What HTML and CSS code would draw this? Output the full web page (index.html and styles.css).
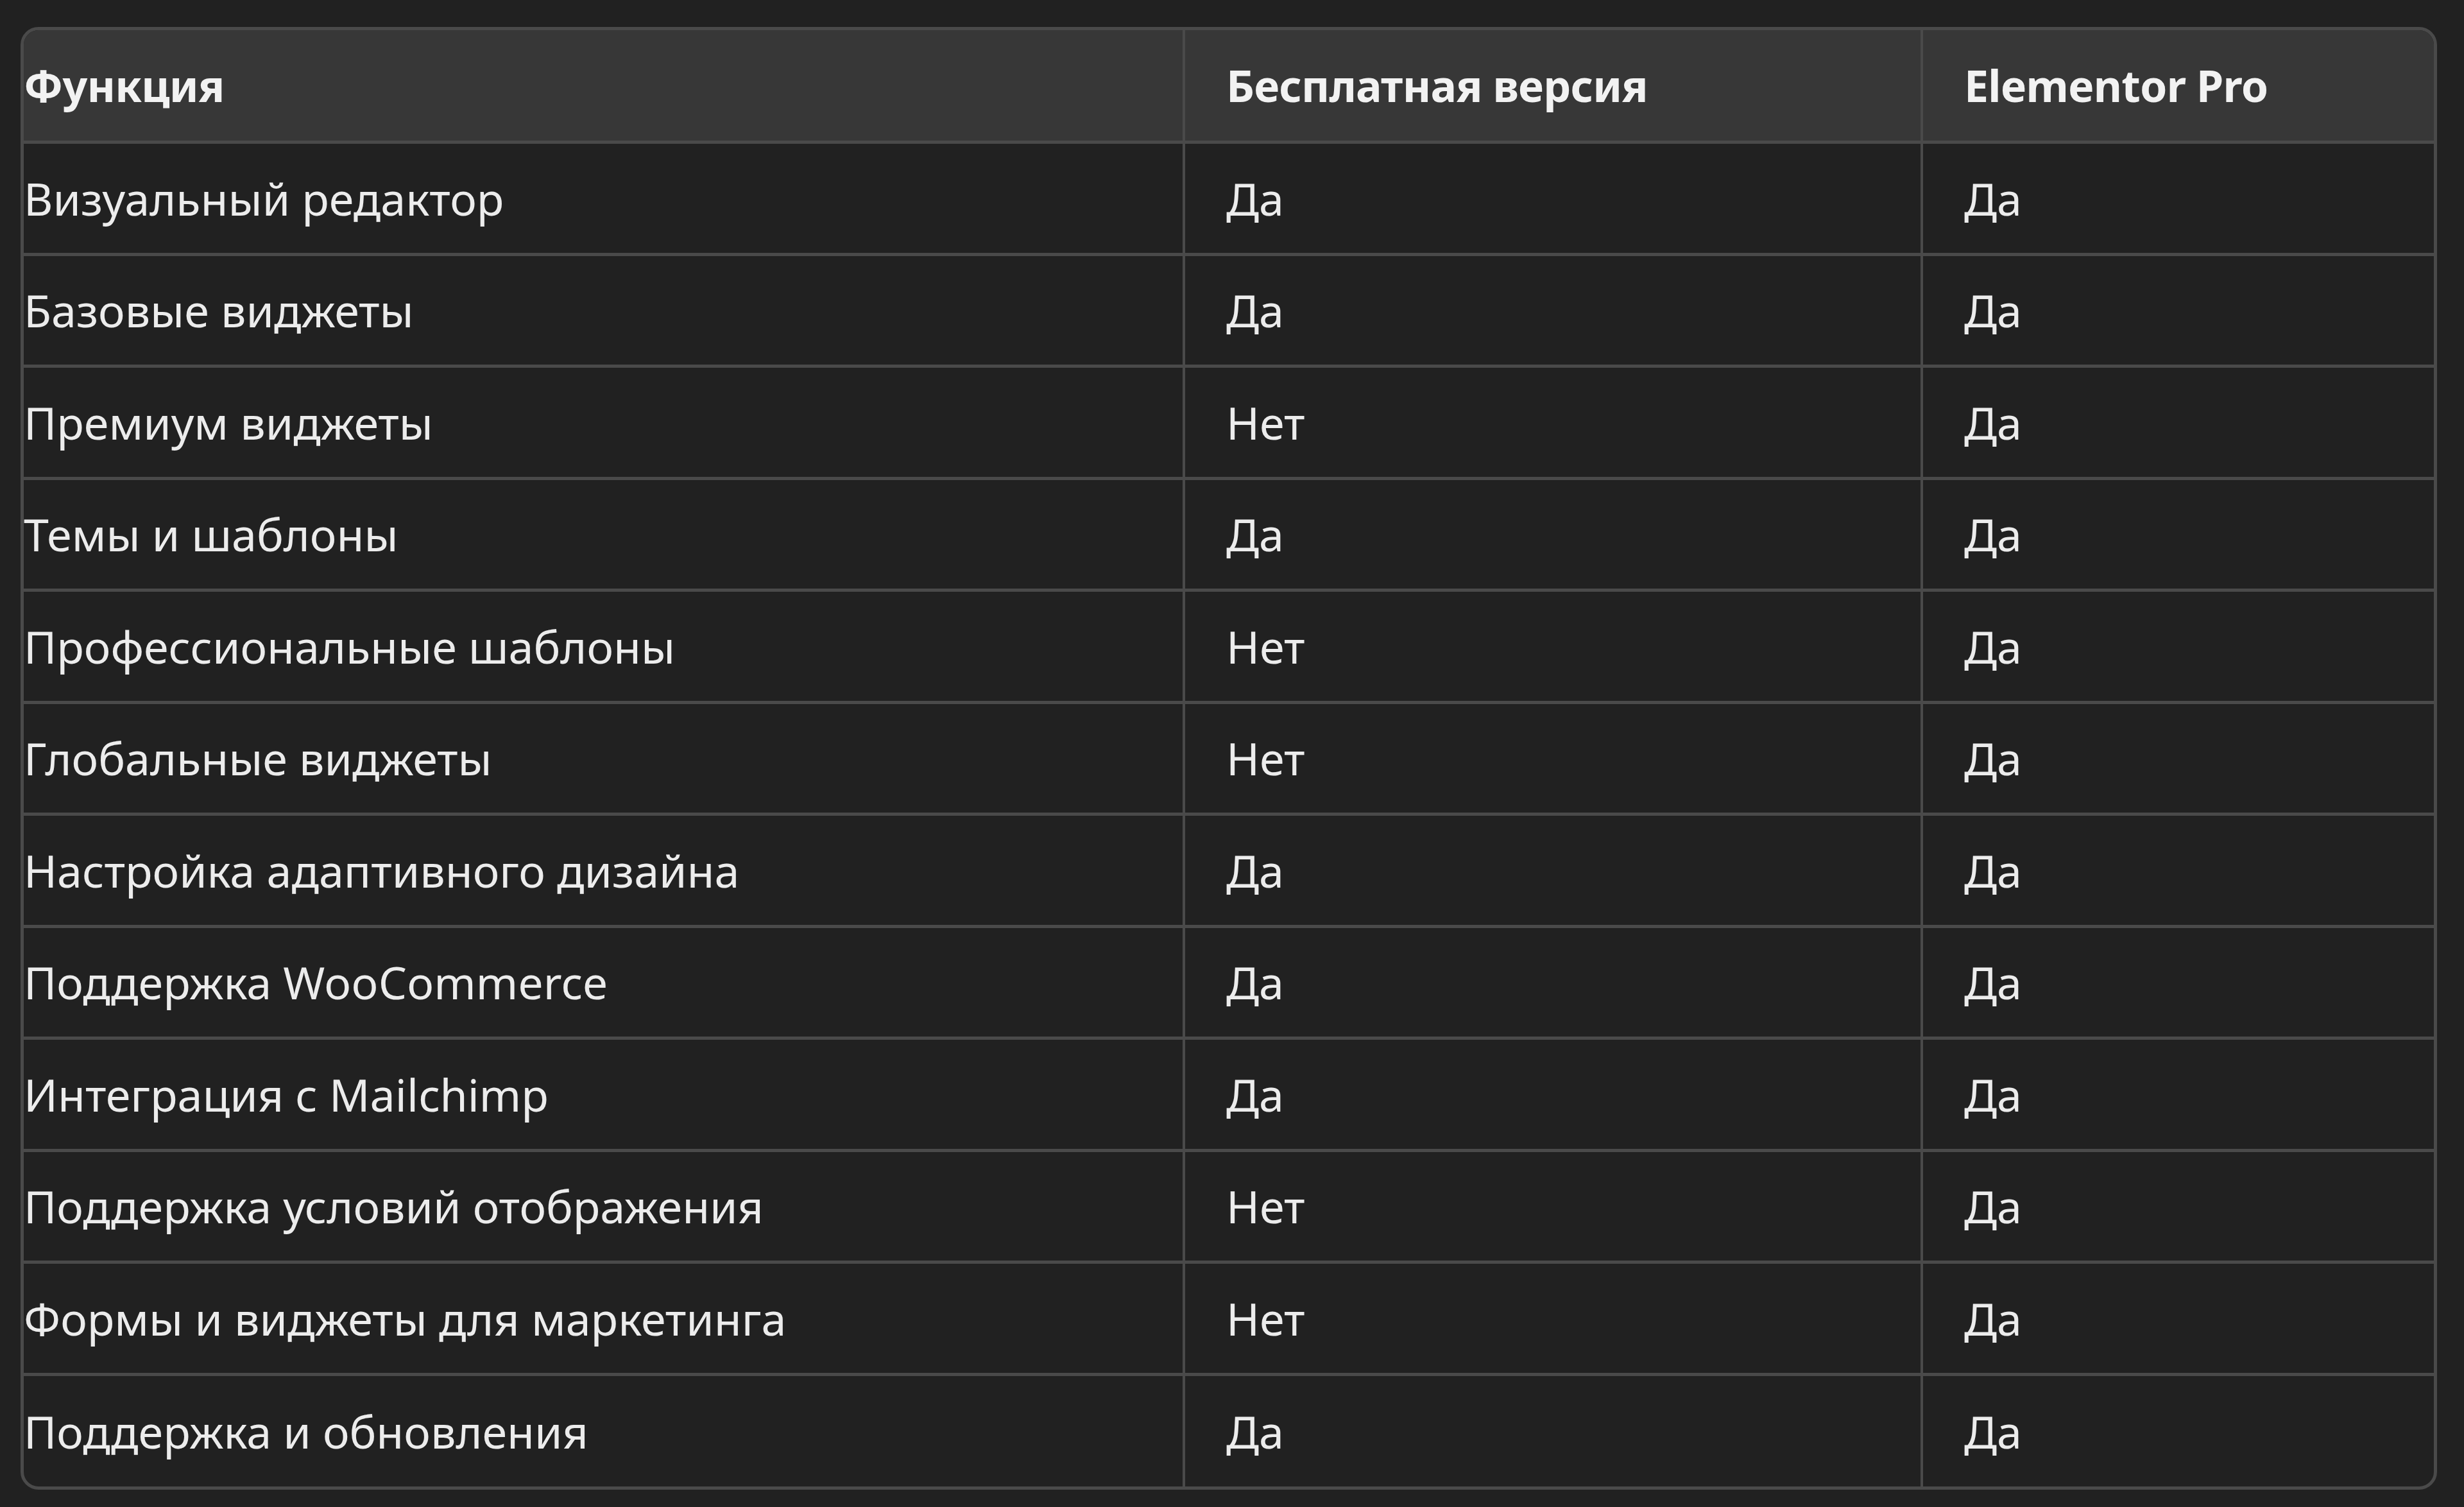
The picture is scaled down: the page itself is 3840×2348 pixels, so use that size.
FILE: index.html
```html
<!DOCTYPE html>
<html lang="ru">
<head>
<meta charset="utf-8">
<title>Сравнение Elementor</title>
<link rel="stylesheet" href="styles.css">
</head>
<body>
<div class="table-wrap">
  <table class="cmp">
    <colgroup>
      <col class="c1"><col class="c2"><col class="c3">
    </colgroup>
    <thead>
      <tr><th>Функция</th><th>Бесплатная версия</th><th>Elementor Pro</th></tr>
    </thead>
    <tbody>
      <tr><td>Визуальный редактор</td><td>Да</td><td>Да</td></tr>
      <tr><td>Базовые виджеты</td><td>Да</td><td>Да</td></tr>
      <tr><td>Премиум виджеты</td><td>Нет</td><td>Да</td></tr>
      <tr><td>Темы и шаблоны</td><td>Да</td><td>Да</td></tr>
      <tr><td>Профессиональные шаблоны</td><td>Нет</td><td>Да</td></tr>
      <tr><td>Глобальные виджеты</td><td>Нет</td><td>Да</td></tr>
      <tr><td>Настройка адаптивного дизайна</td><td>Да</td><td>Да</td></tr>
      <tr><td>Поддержка WooCommerce</td><td>Да</td><td>Да</td></tr>
      <tr><td>Интеграция с Mailchimp</td><td>Да</td><td>Да</td></tr>
      <tr><td>Поддержка условий отображения</td><td>Нет</td><td>Да</td></tr>
      <tr><td>Формы и виджеты для маркетинга</td><td>Нет</td><td>Да</td></tr>
      <tr><td>Поддержка и обновления</td><td>Да</td><td>Да</td></tr>
    </tbody>
  </table>
</div>
</body>
</html>
```

FILE: styles.css
```css
html, body {
  margin: 0;
  padding: 0;
  background: #212121;
}

body {
  padding: 42px 0 0 32px;
  font-family: "Noto Sans", "Open Sans", "DejaVu Sans", sans-serif;
  color: #ececec;
}

.table-wrap {
  width: 3766px;
  box-sizing: border-box;
  border: 5px solid #4a4a4a;
  border-radius: 28px;
  overflow: hidden;
  background: #212121;
}

.cmp {
  width: 100%;
  border-collapse: collapse;
  table-layout: fixed;
}

.c1 { width: 1808px; }
.c2 { width: 1150px; }
.c3 { width: auto; }

.cmp th,
.cmp td {
  height: 174.5px;
  padding: 0 0 0 64px;
  box-sizing: border-box;
  text-align: left;
  vertical-align: middle;
  font-size: 70px;
  line-height: 1.2;
  white-space: nowrap;
  border-left: 4px solid #4a4a4a;
  border-bottom: 5px solid #4a4a4a;
}

.cmp th:first-child,
.cmp td:first-child {
  padding-left: 0;
  border-left: none;
}

.cmp tbody tr:last-child td {
  border-bottom: none;
}

.cmp thead th {
  background: #373737;
  font-weight: 700;
  font-size: 68px;
  letter-spacing: -0.8px;
  color: #f2f2f2;
}

.cmp td {
  font-weight: 400;
}
```
